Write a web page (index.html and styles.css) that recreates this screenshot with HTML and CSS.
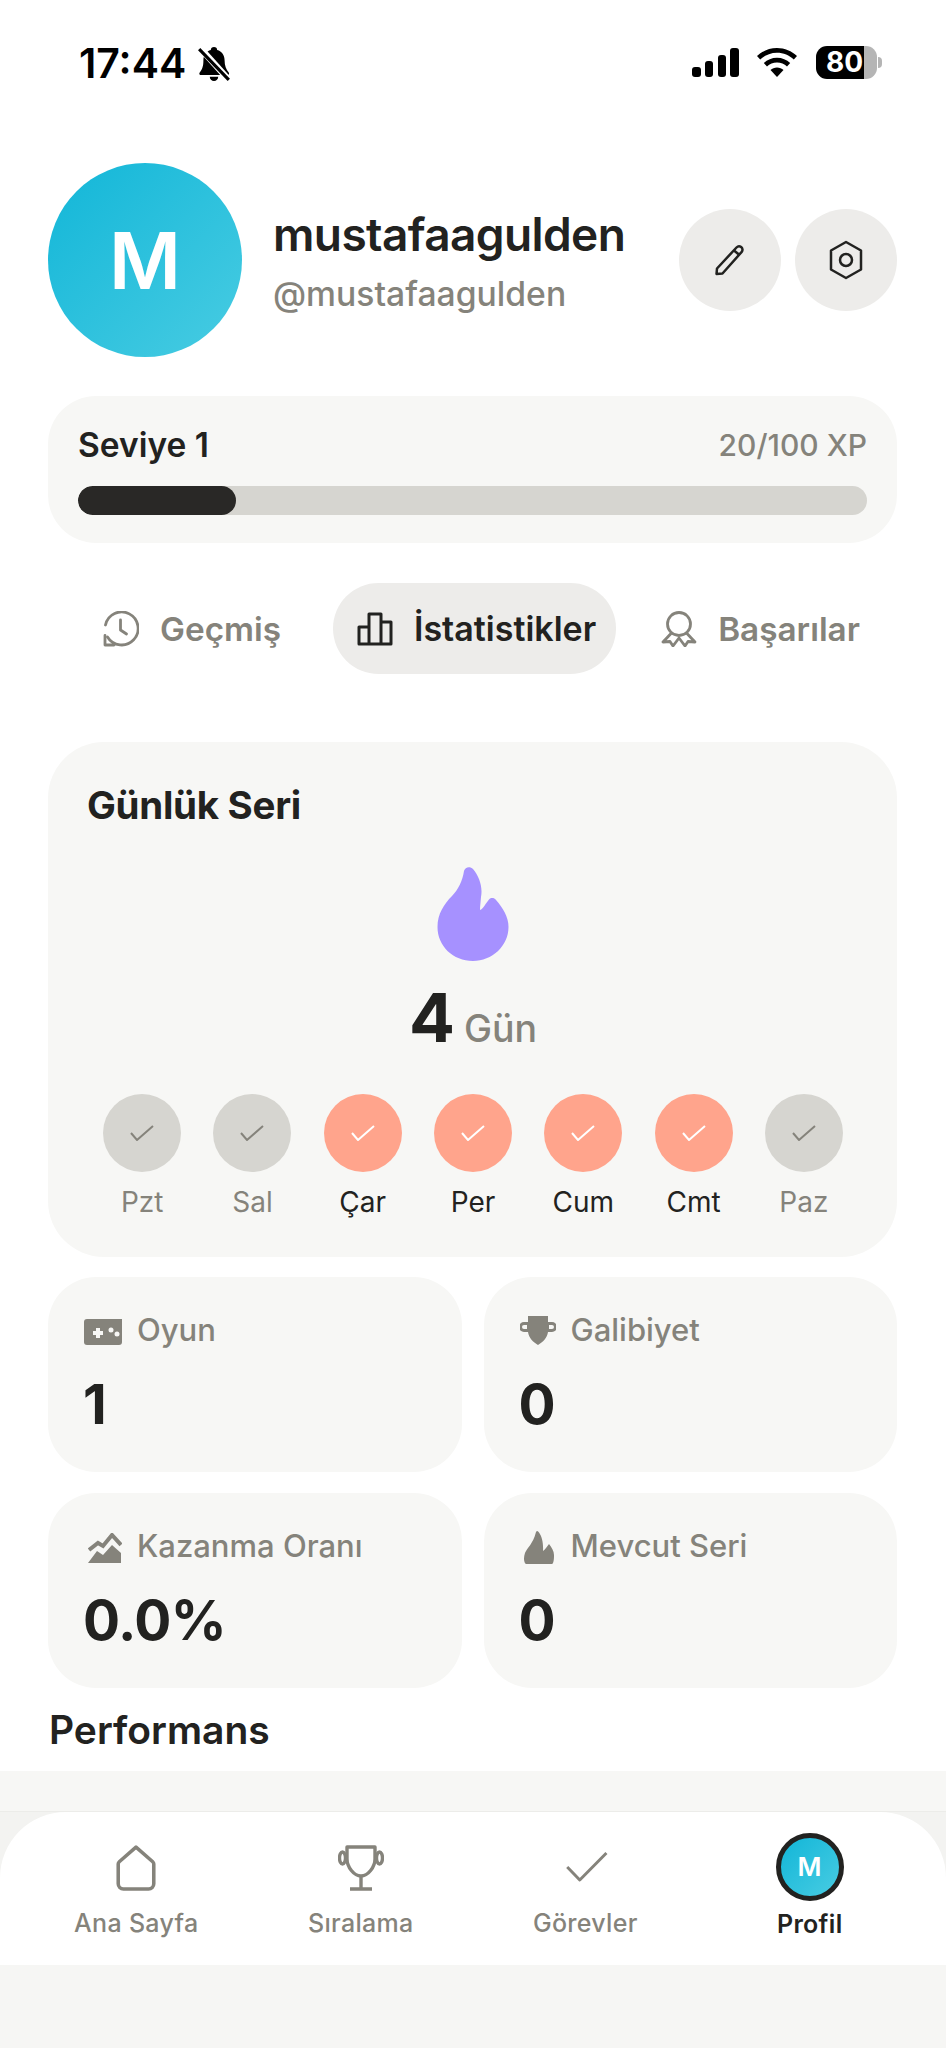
FILE: index.html
```html
<!DOCTYPE html>
<html lang="tr">
<head>
    <meta charset="UTF-8">
    <meta name="viewport" content="width=device-width, initial-scale=1.0">
    <title>Profil</title>
    <link rel="stylesheet" href="styles.css">
</head>
<body>
<div class="page">
    <main class="main">
        <div class="status">
            <div class="status-left">
                <span class="time">17:44</span>
                <svg class="bell" viewBox="0 0 32 34"><path d="M16 1c-1.800 0-3 1.200-3 2.800C8.500 5 6 8.800 6 13.500c0 5.500-1 8.500-3.500 11.500-.8 1-.2 2.500 1.200 2.500h25c1.400 0 2-1.500 1.200-2.500C27.400 22 26 18.500 26 13.500c0-4.700-2.500-8.500-7-9.700C19 2.200 17.800 1 16 1zM12 29h8c0 2.500-1.800 4-4 4s-4-1.500-4-4z"/><path d="M3 2l27 30" stroke="#fff" stroke-width="6"/><path d="M2 3l28 29" stroke="#000" stroke-width="3"/></svg>
            </div>
            <div class="status-right">
                <svg class="signal" viewBox="0 0 47 29"><rect x="0" y="19" width="9" height="10" rx="3"/><rect x="13" y="13" width="8" height="16" rx="3"/><rect x="26" y="7" width="8" height="22" rx="3"/><rect x="38" y="0" width="9" height="29" rx="3"/></svg>
                <svg class="wifi" viewBox="0 0 40 29"><path d="M20 0c7.800 0 14.800 3.100 20 8.100l-3.200 3.400C32.400 7.300 26.500 4.700 20 4.700S7.600 7.300 3.200 11.500L0 8.100C5.200 3.100 12.200 0 20 0z"/><path d="M20 9.800c5.100 0 9.700 2 13.200 5.300l-3.200 3.400c-2.600-2.500-6.100-4-10-4s-7.400 1.500-10 4l-3.200-3.400c3.500-3.300 8.100-5.300 13.200-5.300z"/><path d="M20 19.500c2.500 0 4.800 1 6.500 2.600L20 29l-6.500-6.900c1.700-1.600 4-2.600 6.500-2.600z"/></svg>
                <div class="battery"><div class="battery-body">80</div><div class="battery-tip"></div></div>
            </div>
        </div>

        <div class="content">
            <div class="header">
                <div class="avatar">M</div>
                <div class="names">
                    <div class="name">mustafaagulden</div>
                    <div class="handle">@mustafaagulden</div>
                </div>
                <div class="header-btns">
                    <button class="round-btn">
                        <svg class="icon-edit" viewBox="0 0 32 32"><path d="M3 24.500L22.500 3.500c1.300-1.400 3.300-1.500 4.700-.4 1.500 1.200 1.700 3.300.5 4.800L8.500 29.500 2.500 30z"/><path d="M20 6.500l5.500 4.500"/></svg>
                    </button>
                    <button class="round-btn">
                        <svg class="icon-hex" viewBox="0 0 36 40"><path d="M18 2l15 8.500v19L18 38 3 29.500v-19z"/><circle cx="18" cy="20" r="6"/></svg>
                    </button>
                </div>
            </div>

            <section class="level-card">
                <div class="level-row">
                    <span class="level-name">Seviye 1</span>
                    <span class="level-xp">20/100 XP</span>
                </div>
                <div class="bar"><div class="bar-fill" style="width:20%"></div></div>
            </section>

            <div class="tabs">
                <div class="tab">
                    <svg class="tab-icon" viewBox="0 0 36 36"><path d="M4.500 26A16.500 16.500 0 1 0 2.500 14"/><path d="M2 21.500V31M2 31h9" transform="translate(0 3)"/><path d="M17.500 9v10l6 4"/></svg>
                    <span>Geçmiş</span>
                </div>
                <div class="tab tab-active">
                    <svg class="tab-icon" viewBox="0 0 36 34"><path d="M2 15h10v17H2zM12 2h12v30H12zM24 10h10v22H24z"/></svg>
                    <span>İstatistikler</span>
                </div>
                <div class="tab">
                    <svg class="tab-icon" viewBox="0 0 36 36"><circle cx="18" cy="13" r="11.500"/><path d="M10.500 22L2 31l7-.5 3 4.500 6-8 6 8 3-4.500 7 .5-8.500-9"/></svg>
                    <span>Başarılar</span>
                </div>
            </div>

            <section class="streak-card">
                <h3 class="card-title">Günlük Seri</h3>
                <svg class="flame" viewBox="0 0 72 94"><path d="M27 4C28 0 33-1 36 2C42 9 46 20 44 30C43.500 36 43 40 43 43C46 42 49 36 52 32.500C54 30.500 57 30.500 59 33C66 41 71.500 50 71.500 60C71.500 79 55 94 36 94C16 94 .5 79 .5 60C.5 47 7 37 15 29C21 23 25.500 14 27 4Z"/></svg>
                <div class="streak-count"><span class="streak-num">4</span><span class="streak-unit">Gün</span></div>
                <div class="days">
                    <div class="day"><div class="day-dot"><svg viewBox="0 0 24 16"><path d="M1 8l6 7L23 1"/></svg></div><span>Pzt</span></div>
                    <div class="day"><div class="day-dot"><svg viewBox="0 0 24 16"><path d="M1 8l6 7L23 1"/></svg></div><span>Sal</span></div>
                    <div class="day day-done"><div class="day-dot"><svg viewBox="0 0 24 16"><path d="M1 8l6 7L23 1"/></svg></div><span>Çar</span></div>
                    <div class="day day-done"><div class="day-dot"><svg viewBox="0 0 24 16"><path d="M1 8l6 7L23 1"/></svg></div><span>Per</span></div>
                    <div class="day day-done"><div class="day-dot"><svg viewBox="0 0 24 16"><path d="M1 8l6 7L23 1"/></svg></div><span>Cum</span></div>
                    <div class="day day-done"><div class="day-dot"><svg viewBox="0 0 24 16"><path d="M1 8l6 7L23 1"/></svg></div><span>Cmt</span></div>
                    <div class="day"><div class="day-dot"><svg viewBox="0 0 24 16"><path d="M1 8l6 7L23 1"/></svg></div><span>Paz</span></div>
                </div>
            </section>

            <div class="stats">
                <div class="stat">
                    <div class="stat-label">
                        <svg class="stat-icon" viewBox="0 0 38 26"><path d="M3 0h35v23a3 3 0 0 1-3 3H3a3 3 0 0 1-3-3V3a3 3 0 0 1 3-3z"/><path class="cut" d="M12 9h4v3h3v4h-3v3h-4v-3H9v-4h3z"/><circle class="cut" cx="27" cy="11" r="2.500"/><circle class="cut" cx="33" cy="15" r="2.500"/></svg>
                        <span>Oyun</span>
                    </div>
                    <div class="stat-value">1</div>
                </div>
                <div class="stat">
                    <div class="stat-label">
                        <svg class="stat-icon" viewBox="0 0 36 29"><path d="M8 0h20v6h4a5 5 0 0 1 0 10h-4c-1 6-5 10-10 13C13 26 9 22 8 16H4A5 5 0 0 1 4 6h4zM4 9a2 2 0 0 0 0 4h3V9zM29 9v4h3a2 2 0 0 0 0-4z" fill-rule="evenodd"/></svg>
                        <span>Galibiyet</span>
                    </div>
                    <div class="stat-value">0</div>
                </div>
                <div class="stat">
                    <div class="stat-label">
                        <svg class="stat-icon" viewBox="0 0 34 30"><path d="M1 17l9-7 5 3 9-11 9 10" fill="none" stroke="#85837b" stroke-width="4"/><path d="M0 30l9-12 6 4 9-10 9 8v10z"/></svg>
                        <span>Kazanma Oranı</span>
                    </div>
                    <div class="stat-value">0.0%</div>
                </div>
                <div class="stat">
                    <div class="stat-label">
                        <svg class="stat-icon" viewBox="0 0 30 33"><path d="M12 1c1-1.500 2-1 3 .5 3 4 4.500 11 4 18.500 2-1.500 4-4.500 6-7 2.500 3 5 7 5 11 0 3 0 5-1 8-.5 1-1 1-2 1H3c-1 0-2-.5-2.300-1.500C-.5 29 0 25 1 22c2-5 8-9 11-21z"/></svg>
                        <span>Mevcut Seri</span>
                    </div>
                    <div class="stat-value">0</div>
                </div>
            </div>

            <h3 class="section-title">Performans</h3>
        </div>

        <div class="perf-strip"></div>
    </main>

    <div class="nav-wrap">
        <nav class="nav">
            <div class="nav-item">
                <svg class="nav-icon" viewBox="0 0 44 44"><path d="M22 2L6 16a3 3 0 0 0-1 2.500V37a5 5 0 0 0 5 5h24a5 5 0 0 0 5-5V18.500a3 3 0 0 0-1-2.500z"/></svg>
                <span>Ana Sayfa</span>
            </div>
            <div class="nav-item">
                <svg class="nav-icon" viewBox="0 0 46 46"><path d="M9 2H37V14C37 22 30 31 23 31C16 31 9 22 9 14Z"/><ellipse cx="4.500" cy="13" rx="3" ry="6"/><ellipse cx="41.500" cy="13" rx="3" ry="6"/><path d="M23 31V43M12 44H34"/></svg>
                <span>Sıralama</span>
            </div>
            <div class="nav-item">
                <svg class="nav-icon nav-check" viewBox="0 0 44 44"><path d="M5 21l12 12.500L42.500 7.600"/></svg>
                <span>Görevler</span>
            </div>
            <div class="nav-item nav-active">
                <div class="nav-avatar">M</div>
                <span>Profil</span>
            </div>
        </nav>
    </div>
    <div class="safe-bottom"></div>
</div>
</body>
</html>
```

FILE: styles.css
```css
* {
    box-sizing: border-box;
}
body {
    margin: 0;
    background: #f6f6f4;
    font-family: "Inter", "Noto Sans", sans-serif;
    color: #222220;
}
svg {
    display: block;
}
.page {
    height: 2048px;
    display: flex;
    flex-direction: column;
    overflow: hidden;
}
.main {
    height: 1811px;
    flex: none;
    overflow: hidden;
    background: #fff;
    display: flex;
    flex-direction: column;
}

/* status bar */
.status {
    height: 100px;
    padding: 46px 64px 0 79px;
    display: flex;
    justify-content: space-between;
    flex: none;
}
.status-left {
    display: flex;
    align-items: flex-start;
    gap: 11px;
}
.time {
    font-size: 41px;
    font-weight: 600;
    line-height: 34px;
    color: #000;
}
.bell {
    width: 34px;
    height: 36px;
}
.status-right {
    display: flex;
    align-items: flex-start;
    padding-top: 2px;
}
.signal {
    width: 47px;
    height: 29px;
    margin-right: 18px;
}
.wifi {
    width: 40px;
    height: 29px;
    margin-right: 19px;
}
.battery {
    display: flex;
    align-items: center;
    margin-top: -2px;
}
.battery-body {
    width: 61px;
    height: 33px;
    border-radius: 11px;
    background: linear-gradient(90deg, #000 79%, #b5b5b5 79%);
    color: #fff;
    font-size: 28px;
    font-weight: 700;
    line-height: 33px;
    padding-left: 10px;
}
.battery-tip {
    width: 4px;
    height: 11px;
    margin-left: 1px;
    border-radius: 0 4px 4px 0;
    background: #b5b5b5;
}

.content {
    padding: 0 49px 0 48px;
    flex: none;
}

/* profile head */
.header {
    margin-top: 63px;
    display: flex;
    align-items: center;
}
.avatar {
    width: 194px;
    height: 194px;
    border-radius: 50%;
    background: linear-gradient(135deg, #12b6d8, #48cce2);
    color: #fff;
    font-size: 78px;
    font-weight: 600;
    display: flex;
    align-items: center;
    justify-content: center;
    flex: none;
}
.names {
    flex: 1;
    margin-left: 31px;
    margin-top: -1px;
}
.name {
    font-size: 46px;
    font-weight: 600;
    line-height: 56px;
    letter-spacing: -0.6px;
}
.handle {
    font-size: 33.7px;
    font-weight: 500;
    line-height: 40px;
    margin-top: 12px;
    color: #85837b;
}
.header-btns {
    display: flex;
    gap: 14px;
}
.round-btn {
    width: 102px;
    height: 102px;
    padding: 0;
    border: none;
    border-radius: 50%;
    background: #edecea;
    display: flex;
    align-items: center;
    justify-content: center;
}
.round-btn svg {
    fill: none;
    stroke: #222220;
    stroke-width: 2.5;
    stroke-linejoin: round;
}
.icon-edit {
    width: 32px;
    height: 32px;
}
.icon-hex {
    width: 36px;
    height: 40px;
}

/* level */
.level-card {
    margin-top: 39px;
    height: 147px;
    padding: 30px 30px 0;
    background: #f7f7f5;
    border-radius: 48px;
}
.level-row {
    display: flex;
    justify-content: space-between;
    align-items: center;
    height: 38px;
}
.level-name {
    font-size: 33.5px;
    font-weight: 600;
}
.level-xp {
    font-size: 30px;
    font-weight: 500;
    color: #85837b;
}
.bar {
    margin-top: 22px;
    height: 29px;
    background: #d6d5d0;
    border-radius: 15px;
    overflow: hidden;
}
.bar-fill {
    height: 100%;
    background: #292826;
    border-radius: 15px;
}

/* tabs */
.tabs {
    margin-top: 40px;
    padding-left: 31px;
    display: flex;
}
.tab {
    height: 91px;
    padding: 0 21px 0 24px;
    border-radius: 46px;
    display: flex;
    align-items: center;
    gap: 21px;
    font-size: 33.3px;
    font-weight: 600;
    color: #85837b;
}
.tab-active {
    margin: 0 21px 0 31px;
    padding-right: 20px;
    font-size: 34px;
    background: #edecea;
    color: #222220;
}
.tab-icon {
    width: 36px;
    height: 36px;
    fill: none;
    stroke: #85837b;
    stroke-width: 2.8;
    stroke-linejoin: round;
    stroke-linecap: round;
}
.tab-active .tab-icon {
    stroke: #222220;
    stroke-width: 3;
}

/* streak */
.streak-card {
    margin-top: 68px;
    height: 515px;
    padding: 40px 38px 0 39px;
    background: #f7f7f5;
    border-radius: 56px;
}
.card-title {
    margin: 0;
    font-size: 38.5px;
    font-weight: 700;
    line-height: 46px;
    letter-spacing: -0.3px;
}
.flame {
    width: 72px;
    height: 94px;
    margin: 39px auto 0;
    fill: #a691ff;
}
.streak-count {
    margin-top: 16px;
    display: flex;
    justify-content: center;
    align-items: baseline;
    gap: 9px;
    height: 80px;
    line-height: 80px;
}
.streak-num {
    font-size: 68px;
    font-weight: 700;
}
.streak-unit {
    font-size: 37.5px;
    font-weight: 500;
    color: #85837b;
}
.days {
    margin-top: 37px;
    display: grid;
    grid-template-columns: repeat(7, 1fr);
}
.day {
    display: flex;
    flex-direction: column;
    align-items: center;
    font-size: 28px;
    font-weight: 400;
    line-height: 34px;
    color: #85837b;
}
.day-dot {
    width: 78px;
    height: 78px;
    border-radius: 50%;
    background: #d6d5d0;
    display: flex;
    align-items: center;
    justify-content: center;
    margin-bottom: 13px;
}
.day-dot svg {
    width: 24px;
    height: 16px;
    fill: none;
    stroke: #85837b;
    stroke-width: 2;
}
.day-done {
    color: #222220;
}
.day-done .day-dot {
    background: #ffa48c;
}
.day-done .day-dot svg {
    stroke: #fff;
}

/* stat cards */
.stats {
    margin-top: 20px;
    display: grid;
    grid-template-columns: 1fr 1fr;
    gap: 21px 22px;
}
.stat {
    height: 195px;
    padding: 32px 36px 0;
    background: #f7f7f5;
    border-radius: 48px;
}
.stat-label {
    display: flex;
    align-items: center;
    gap: 15px;
    height: 40px;
    font-size: 31px;
    font-weight: 500;
    color: #85837b;
}
.stat-icon {
    flex: none;
    fill: #85837b;
}
.stat-icon .cut {
    fill: #f7f7f5;
}
.stat:nth-child(1) .stat-icon {
    width: 38px;
    height: 26px;
    margin-top: 6px;
}
.stat:nth-child(2) .stat-icon {
    width: 36px;
    height: 29px;
    margin-top: 2px;
}
.stat:nth-child(3) .stat-icon {
    width: 34px;
    height: 30px;
    margin-left: 4px;
    margin-top: 6px;
}
.stat:nth-child(4) .stat-icon {
    width: 30px;
    height: 33px;
    margin-left: 4px;
    margin-right: 2px;
    margin-top: 4px;
}
.stat-value {
    margin-top: 23px;
    margin-left: -1px;
    font-size: 55px;
    font-weight: 700;
    line-height: 64px;
    letter-spacing: -0.5px;
}

.section-title {
    margin: 19px 0 18px 1px;
    font-size: 39px;
    font-weight: 600;
    line-height: 46px;
}
.perf-strip {
    flex: 1;
    background: #f7f7f5;
}

/* bottom nav */
.nav-wrap {
    flex: none;
    background: #f3f3f1;
    border-top: 1px solid #ecece9;
}
.nav {
    height: 153px;
    padding: 0 24px;
    background: #fff;
    border-radius: 66px 66px 0 0;
    display: grid;
    grid-template-columns: repeat(4, 1fr);
}
.nav-item {
    padding-top: 21px;
    display: flex;
    flex-direction: column;
    align-items: center;
    font-size: 25px;
    letter-spacing: 0.3px;
    font-weight: 500;
    line-height: 30px;
    color: #85837b;
}
.nav-icon {
    width: 46px;
    height: 46px;
    margin-top: 12px;
    margin-bottom: 17px;
    fill: none;
    stroke: #85837b;
    stroke-width: 3.4;
    stroke-linejoin: round;
}
.nav-check {
    stroke-width: 2.800;
}
.nav-active {
    color: #222220;
    font-weight: 600;
}
.nav-avatar {
    width: 68px;
    height: 68px;
    margin-bottom: 8px;
    border: 5px solid #222220;
    border-radius: 50%;
    background: linear-gradient(135deg, #12b6d8, #48cce2);
    color: #fff;
    font-size: 26px;
    font-weight: 600;
    display: flex;
    align-items: center;
    justify-content: center;
}
.safe-bottom {
    flex: 1;
    background: #f6f6f4;
}
```
